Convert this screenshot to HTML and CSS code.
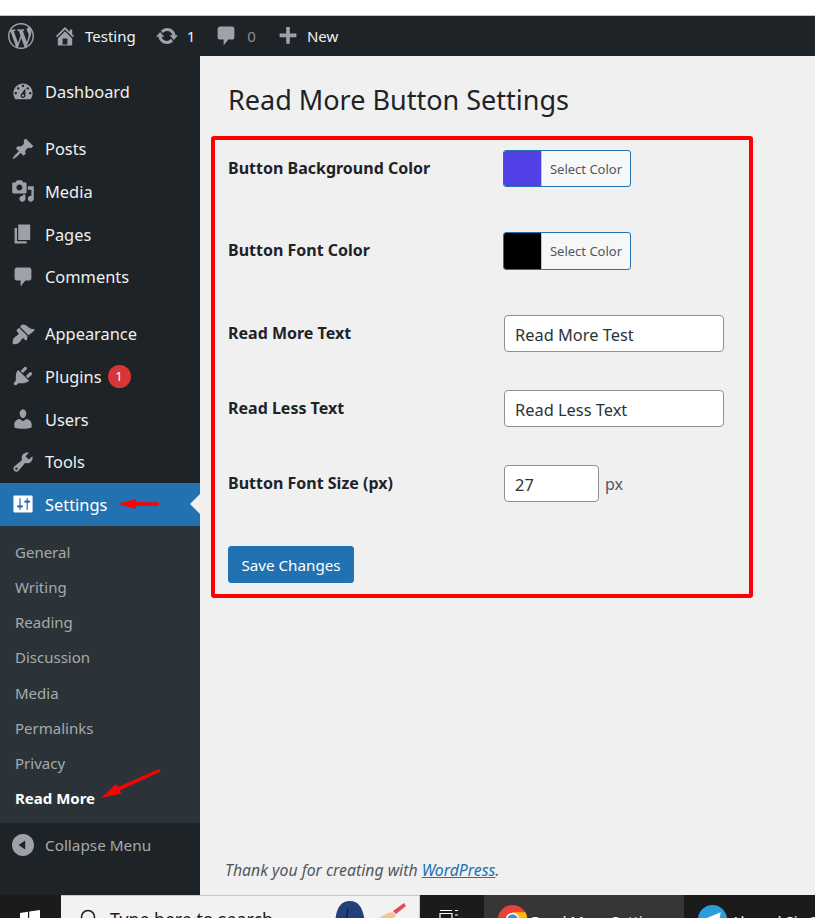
FILE: index.html
```html
<!DOCTYPE html>
<html lang="en">
<head>
<meta charset="utf-8">
<title>Read More Button Settings</title>
<link rel="stylesheet" href="styles.css">
</head>
<body>
<div class="top-strip"></div>
<header class="adminbar">
  <svg class="ab-logo" viewBox="0 0 20 20"><path d="M20 10c0-5.51-4.49-10-10-10C4.48 0 0 4.49 0 10c0 5.52 4.48 10 10 10 5.51 0 10-4.48 10-10zM7.78 15.37L4.37 6.22c.55-.02 1.17-.08 1.17-.08.5-.06.44-1.13-.06-1.11 0 0-1.45.11-2.37.11-.18 0-.37 0-.58-.01C4.12 2.69 6.87 1.11 10 1.11c2.33 0 4.45.87 6.05 2.34-.68-.11-1.65.39-1.65 1.58 0 .74.45 1.36.9 2.1.35.61.55 1.36.55 2.46 0 1.49-1.4 5-1.4 5l-3.03-8.37c.54-.02.82-.17.82-.17.5-.05.44-1.25-.06-1.22 0 0-1.44.12-2.38.12-.87 0-2.33-.12-2.33-.12-.5-.03-.56 1.2-.06 1.22l.92.08 1.26 3.41zM17.41 10c.24-.64.74-1.87.43-4.25.7 1.29 1.05 2.71 1.05 4.25 0 3.29-1.73 6.24-4.4 7.78.97-2.59 1.94-5.2 2.92-7.78zM6.1 18.09C3.12 16.65 1.11 13.53 1.11 10c0-1.3.23-2.48.72-3.59C3.25 10.3 4.67 14.2 6.1 18.09zm4.03-6.63l2.58 6.98c-.86.29-1.76.45-2.71.45-.79 0-1.57-.11-2.29-.33.81-2.38 1.62-4.74 2.42-7.1z"/></svg>
  <svg class="ab-icon ab-home" viewBox="0 0 20 20"><path d="M16 8.5l1.53 1.53-1.06 1.06L10 4.62l-6.47 6.47-1.06-1.06L10 2.5l4 4v-2h2v4zm-6-2.46l6 5.99V18H4v-5.97zM12 17v-5H8v5h4z"/></svg>
  <span class="ab-text ab-site">Testing</span>
  <svg class="ab-icon ab-update" viewBox="0 0 20 20"><path d="M10.2 3.28c3.53 0 6.43 2.61 6.92 6h2.08l-3.5 4-3.5-4h2.32c-.45-1.97-2.21-3.45-4.32-3.45-1.45 0-2.73.71-3.54 1.78L4.95 5.66C6.23 4.2 8.11 3.28 10.2 3.28zm-.4 13.44c-3.52 0-6.43-2.61-6.92-6H.8l3.5-4c1.17 1.33 2.33 2.67 3.5 4H5.48c.45 1.97 2.21 3.45 4.32 3.45 1.45 0 2.73-.71 3.54-1.78l1.71 1.95c-1.28 1.46-3.15 2.38-5.25 2.38z"/></svg>
  <span class="ab-text ab-count">1</span>
  <svg class="ab-icon ab-comment" viewBox="0 0 20 20"><path d="M5 2h10c1.100 0 2 .9 2 2v7c0 1.100-.9 2-2 2h-3l-4 5v-5H5c-1.100 0-2-.9-2-2V4c0-1.100.9-2 2-2z"/></svg>
  <span class="ab-text ab-zero">0</span>
  <svg class="ab-icon ab-plus" viewBox="0 0 20 20"><path d="M17 8v3h-5.5v5.5h-3V11H3V8h5.5V2.500h3V8z"/></svg>
  <span class="ab-text">New</span>
</header>
<div class="workspace">
  <nav class="sidebar">
    <ul class="menu">
      <li class="item"><svg class="mi" viewBox="0 0 20 20"><path d="M3.76 16h12.48c1.1-1.37 1.76-3.11 1.76-5 0-4.42-3.58-8-8-8s-8 3.58-8 8c0 1.89.66 3.63 1.76 5zM10 4c.55 0 1 .45 1 1s-.45 1-1 1-1-.45-1-1 .45-1 1-1zM6 6c.55 0 1 .45 1 1s-.45 1-1 1-1-.45-1-1 .45-1 1-1zm8 0c.55 0 1 .45 1 1s-.45 1-1 1-1-.45-1-1 .45-1 1-1zm-5.37 5.55L12 7v6c0 1.1-.9 2-2 2s-2-.9-2-2c0-.57.24-1.08.63-1.45zM4 10c.55 0 1 .45 1 1s-.45 1-1 1-1-.45-1-1 .45-1 1-1zm12 0c.55 0 1 .45 1 1s-.45 1-1 1-1-.45-1-1 .45-1 1-1zm-5 3c0-.55-.45-1-1-1s-1 .45-1 1 .45 1 1 1 1-.45 1-1z"/></svg>Dashboard</li>
      <li class="item sep"><svg class="mi" viewBox="0 0 20 20"><path d="M10.44 3.02l1.82-1.82 6.36 6.35-1.83 1.82c-1.05-.68-2.48-.57-3.41.36l-.75.75c-.92.93-1.04 2.35-.35 3.41l-1.83 1.82-2.41-2.41-2.8 2.79c-.42.42-3.38 2.71-3.8 2.29s1.86-3.39 2.28-3.81l2.79-2.79L4.1 9.36l1.83-1.82c1.05.69 2.48.57 3.4-.36l.75-.75c.93-.92 1.05-2.35.36-3.41z"/></svg>Posts</li>
      <li class="item"><svg class="mi" viewBox="0 0 20 20"><path d="M13 11V4c0-.55-.45-1-1-1h-1.67L9 1H5L3.67 3H2c-.55 0-1 .45-1 1v7c0 .55.45 1 1 1h10c.55 0 1-.45 1-1zM7 4.5c1.38 0 2.5 1.12 2.5 2.5S8.38 9.5 7 9.5 4.5 8.38 4.5 7 5.62 4.5 7 4.5zM14 6h5v10.5c0 1.38-1.12 2.5-2.5 2.5S14 17.88 14 16.5s1.12-2.5 2.5-2.5c.17 0 .34.02.5.05V9h-3V6zm-4 8.05V13h2v3.5c0 1.38-1.12 2.5-2.5 2.5S7 17.88 7 16.5 8.12 14 9.5 14c.17 0 .34.02.5.05z"/></svg>Media</li>
      <li class="item"><svg class="mi" viewBox="0 0 20 20"><path d="M6 15V2h10v13H6zm-1 1h8v2H3V5h2v11z"/></svg>Pages</li>
      <li class="item"><svg class="mi" viewBox="0 0 20 20"><path d="M5 2h10c1.100 0 2 .9 2 2v7c0 1.100-.9 2-2 2h-3l-4 5v-5H5c-1.100 0-2-.9-2-2V4c0-1.100.9-2 2-2z"/></svg>Comments</li>
      <li class="item sep"><svg class="mi" viewBox="0 0 20 20"><path d="M14.48 11.06L7.41 3.99l1.5-1.5c.5-.56 2.3-.47 3.51.32 1.21.8 1.43 1.28 2.91 2.1 1.18.64 2.45 1.26 4.45.85-.4 1.8-2.6 3.3-3.3 3.9-.7.6-1.4 1.2-2 1.4zm-.71.71L6.7 4.7 4.93 6.47c-.39.39-.39 1.02 0 1.41l1.06 1.06c.39.39.39 1.03 0 1.42-.6.6-1.43 1.11-2.21 1.69-.35.26-.7.53-1.01.84-1.3 1.3-1.6 3.6-1.2 5.4 1.9.4 4 .1 5.3-1.2.31-.31.58-.66.84-1.01.58-.78 1.09-1.61 1.69-2.21.39-.39 1.03-.39 1.42 0l1.06 1.06c.39.39 1.02.39 1.41 0z"/></svg>Appearance</li>
      <li class="item"><svg class="mi" viewBox="0 0 20 20"><path d="M13.11 4.36L9.87 7.6 8 5.73l3.24-3.24c.35-.34 1.05-.2 1.56.32.52.51.66 1.21.31 1.55zm-8 1.77l.91-1.12 9.01 9.01-1.19.84c-.71.71-2.63 1.16-3.82 1.16H6.14L4.9 17.26c-.59.59-1.54.59-2.12 0-.59-.58-.59-1.53 0-2.12l1.24-1.24v-3.88c0-1.13.4-3.19 1.09-3.89zm7.26 3.97l3.24-3.24c.34-.35 1.04-.21 1.55.31.52.51.66 1.21.31 1.55l-3.24 3.25z"/></svg>Plugins<span class="badge">1</span></li>
      <li class="item"><svg class="mi" viewBox="0 0 20 20"><path d="M10 9.25c-2.27 0-2.73-3.44-2.73-3.44C7 4.02 7.82 2 9.97 2c2.16 0 2.98 2.02 2.71 3.81 0 0-.41 3.44-2.68 3.44zm0 2.57L12.72 10c2.39 0 4.52 2.33 4.52 4.53v2.49s-3.65 1.13-7.24 1.13c-3.65 0-7.24-1.13-7.24-1.13v-2.49c0-2.25 1.94-4.48 4.47-4.48z"/></svg>Users</li>
      <li class="item"><svg class="mi" viewBox="0 0 20 20"><path d="M16.68 9.77c-1.34 1.34-3.3 1.67-4.95.99l-5.41 6.52c-.99.99-2.59.99-3.58 0s-.99-2.59 0-3.57l6.52-5.42c-.68-1.65-.35-3.61.99-4.95 1.28-1.28 3.12-1.62 4.72-1.06l-2.89 2.89 2.82 2.82 2.86-2.87c.53 1.58.18 3.39-1.08 4.65zM3.81 16.21c.4.39 1.04.39 1.43 0 .4-.4.4-1.04 0-1.43-.39-.4-1.03-.4-1.43 0-.39.39-.39 1.03 0 1.43z"/></svg>Tools</li>
      <li class="item current"><svg class="mi" viewBox="0 0 20 20"><path d="M18 16V4c0-.55-.45-1-1-1H3c-.55 0-1 .45-1 1v12c0 .55.45 1 1 1h14c.55 0 1-.45 1-1zM8 11h1c.55 0 1 .45 1 1s-.45 1-1 1H8v1.5c0 .28-.22.5-.5.5s-.5-.22-.5-.5V13H6c-.55 0-1-.45-1-1s.45-1 1-1h1V5.5c0-.28.22-.5.5-.5s.5.22.5.5V11zm5-2h-1c-.55 0-1-.45-1-1s.45-1 1-1h1V5.5c0-.28.22-.5.5-.5s.5.22.5.5V7h1c.55 0 1 .45 1 1s-.45 1-1 1h-1v5.5c0 .28-.22.5-.5.5s-.5-.22-.5-.5V9z"/></svg>Settings<span class="notch"></span></li>
    </ul>
    <ul class="submenu">
      <li>General</li>
      <li>Writing</li>
      <li>Reading</li>
      <li>Discussion</li>
      <li>Media</li>
      <li>Permalinks</li>
      <li>Privacy</li>
      <li class="active">Read More</li>
    </ul>
    <div class="collapse"><svg class="mi" viewBox="0 0 20 20"><path d="M10 20c5.52 0 10-4.48 10-10 0-5.52-4.48-10-10-10C4.48 0 0 4.48 0 10c0 5.52 4.48 10 10 10zm2-14v8l-6-4z"/></svg>Collapse Menu</div>
  </nav>
  <main class="content">
    <h1 class="title">Read More Button Settings</h1>
    <form class="panel">
      <div class="row row-color">
        <label class="label">Button Background Color</label>
        <button type="button" class="picker"><span class="swatch swatch-blue"></span><span class="picker-text">Select Color</span></button>
      </div>
      <div class="row row-color">
        <label class="label">Button Font Color</label>
        <button type="button" class="picker picker-tall"><span class="swatch swatch-black"></span><span class="picker-text">Select Color</span></button>
      </div>
      <div class="row row-text">
        <label class="label">Read More Text</label>
        <input class="field" type="text" value="Read More Test">
      </div>
      <div class="row row-text">
        <label class="label">Read Less Text</label>
        <input class="field" type="text" value="Read Less Text">
      </div>
      <div class="row row-size">
        <label class="label">Button Font Size (px)</label>
        <input class="field field-num" type="text" value="27"><span class="unit">px</span>
      </div>
      <button type="button" class="save">Save Changes</button>
    </form>
    <p class="thanks">Thank you for creating with <a href="#">WordPress</a>.</p>
  </main>
</div>
<footer class="taskbar">
  <svg class="win" viewBox="0 0 20 20"><path d="M0 3l8-1.2V9.500H0zM9.200 1.600L20 0v9.500H9.200zM0 10.500h8v7.700L0 17zM9.200 10.500H20V20L9.200 18.400z"/></svg>
  <div class="search">
    <svg class="search-ico" viewBox="0 0 20 20"><circle cx="9" cy="9" r="6.500"/></svg>
    <span class="search-text">Type here to search</span>
    <svg class="helmet" viewBox="0 0 34 26"><path d="M3 26C2 9 7 1 16 1s13 8 14 25z"/><path class="helmet-mark" d="M14 8l-1 9"/></svg>
    <svg class="bat" viewBox="0 0 32 24"><path class="bat-blade" d="M0 18l13-7 5-1 3 3-3 4-8 7H0z"/><path class="bat-grip" d="M18 9l11-8 2 3-10 8z"/></svg>
  </div>
  <svg class="taskview" viewBox="0 0 22 20"><path d="M1 .5h12M1 3.500h12v8H1zM16 .5h3M16 5h3M16 9h3"/></svg>
  <div class="task task-active">
    <svg class="task-ico" viewBox="0 0 28 28"><circle cx="14" cy="14" r="14" fill="#ea4335"/><path d="M14 14L2 21a14 14 0 0 0 12 7z" fill="#34a853"/><path d="M14 7h12.500a14 14 0 0 1-2 16L14 14z" fill="#fbbc05"/><circle cx="14" cy="14" r="6.500" fill="#fff"/><circle cx="14" cy="14" r="5" fill="#4285f4"/></svg>
    <span>Read More Settings</span>
  </div>
  <div class="task">
    <svg class="task-ico" viewBox="0 0 28 28"><circle cx="14" cy="14" r="14" fill="#2a9ddc"/><path d="M5 14l17-7-3 15-5-4-3 3-1-5z" fill="#fff"/></svg>
    <span>Ahmed Sir Class</span>
  </div>
</footer>
<svg class="annotations" viewBox="0 0 815 918">
  <path d="M118 504l18-5-1 3 24 .5v3l-24 .5 1 3z"/>
  <path d="M101 798l15-14 2 3 41-18 1.500 2.500-41 19 2 3z"/>
</svg>
</body>
</html>
```

FILE: styles.css
```css
* { box-sizing: border-box; }
html, body { margin: 0; padding: 0; }
body {
  position: relative;
  height: 918px;
  overflow: hidden;
  display: grid;
  grid-template-rows: 16px 40px 1fr 23px;
  font-family: "Noto Sans", "Open Sans", sans-serif;
  color: #1d2327;
  background: #f0f0f0;
}
ul { list-style: none; margin: 0; padding: 0; }

.top-strip { background: #fff; border-bottom: 1px solid #c3c4c7; }

.adminbar {
  display: flex;
  align-items: center;
  background: #1d2327;
  color: #f0f0f1;
  font-size: 15px;
  padding-left: 8px;
}
.adminbar svg { fill: #9ca2a7; flex: none; }
.ab-logo { width: 26px; height: 26px; margin-right: 19px; }
.ab-icon { width: 24px; height: 24px; }
.ab-site { margin-left: 8px; }
.ab-update { margin-left: 19px; }
.ab-count { margin-left: 8px; }
.ab-comment { margin-left: 19px; }
.ab-zero { margin-left: 9px; color: #8c8f94; }
.ab-plus { margin-left: 20px; margin-right: 7px; }

.workspace { display: grid; grid-template-columns: 200px 1fr; min-height: 0; }

.sidebar { background: #1d2327; color: #f0f0f1; font-size: 16.400px; }
.menu { padding-top: 14px; }
.item {
  position: relative;
  display: flex;
  align-items: center;
  height: 42.750px;
  padding-top: 1px;
}
.sep { margin-top: 14px; }
.mi { width: 24px; height: 24px; margin: 0 10px 0 11px; fill: #9ca2a7; flex: none; }
.current { padding-top: 0; background: #2271b1; color: #fff; }
.current .mi { fill: #fff; }
.notch {
  position: absolute;
  right: 0;
  top: 50%;
  margin-top: -10px;
  border: 10px solid transparent;
  border-left: 0;
  border-right-color: #f0f0f0;
}
.badge {
  display: inline-flex;
  align-items: center;
  justify-content: center;
  width: 23px;
  height: 23px;
  margin-left: 6px;
  border-radius: 50%;
  background: #d63638;
  color: #fff;
  font-size: 13px;
}
.submenu {
  background: #2c3338;
  padding: 9.400px 0 6.600px;
  font-size: 15px;
  color: #a7aaad;
}
.submenu li {
  height: 35.200px;
  line-height: 35.200px;
  padding-left: 15px;
}
.submenu .active { color: #fff; font-weight: 700; }
.collapse {
  display: flex;
  align-items: center;
  height: 44px;
  color: #a7aaad;
  font-size: 15.300px;
}
.collapse .mi { width: 22px; height: 22px; margin: 0 11px 0 12px; }

.content { display: flex; flex-direction: column; padding-left: 11px; min-width: 0; }
.title {
  margin: 24px 0 16px 17px;
  font-size: 27px;
  line-height: 40px;
  font-weight: 400;
}
.panel {
  width: 542px;
  padding: 10px 0 11px 13px;
  border: 4px solid #f00;
  border-radius: 3px;
  display: flex;
  flex-direction: column;
  align-items: flex-start;
}
.row { display: flex; align-items: center; width: 100%; }
.row-color { margin-bottom: 45px; }
.row-text { margin-bottom: 38px; }
.row-size { margin-bottom: 44px; }
.label { width: 276px; padding-bottom: 2px; font-size: 16px; font-weight: 700; flex: none; }
.row-color .label { width: 275px; }

.picker {
  display: flex;
  align-items: stretch;
  width: 128px;
  height: 37px;
  padding: 0;
  background: #f6f7f7;
  border: 1px solid #2271b1;
  border-radius: 3px;
  font: inherit;
  overflow: hidden;
}
.picker-tall { height: 38px; }
.swatch { width: 38px; flex: none; border-right: 1px solid #c3c4c7; }
.swatch-blue { background: #5040e6; }
.swatch-black { background: #000; }
.picker-text { flex: 1; padding-top: 1px; font-size: 13px; line-height: 35px; color: #50575e; text-align: center; }

.field {
  width: 220px;
  height: 37px;
  padding: 1px 10px 0;
  border: 1px solid #8c8f94;
  border-radius: 4px;
  background: #fff;
  color: #2c3338;
  font-family: inherit;
  font-size: 16.400px;
}
.field-num { width: 95px; }
.unit { margin-left: 6px; font-size: 16px; color: #50575e; }

.save {
  width: 126px;
  height: 37px;
  padding: 0;
  background: #2271b1;
  border: 1px solid #2271b1;
  border-radius: 3px;
  color: #fff;
  font-family: inherit;
  font-size: 15.200px;
}

.thanks {
  margin: auto 0 14px 14px;
  font-size: 15.800px;
  font-style: italic;
  color: #50575e;
}
.thanks a { color: #2271b1; }

.taskbar {
  display: flex;
  overflow: hidden;
  background: #1b1b1b;
  color: #f2f2f2;
  font-size: 15px;
}
.taskbar > svg { flex: none; }
.win { width: 20px; height: 20px; margin: 15px 21px 0 20px; fill: #fff; }
.search {
  display: flex;
  width: 359px;
  height: 40px;
  flex: none;
  background: #f2f2f2;
  border-top: 1px solid #c8c8c8;
  border-right: 1px solid #c8c8c8;
  color: #1b1b1b;
  font-size: 17.700px;
}
.search-ico { width: 20px; height: 20px; margin: 12px 0 0 18px; flex: none; fill: none; stroke: #1b1b1b; stroke-width: 1.500; }
.search-text { margin: 12px 0 0 11px; width: 222px; flex: none; line-height: 22px; white-space: nowrap; }
.helmet { width: 38px; height: 29px; margin-top: 4px; fill: #24407a; flex: none; }
.helmet-mark { stroke: #0c1a3a; fill: none; }
.bat { width: 32px; height: 24px; margin: 6px 0 0 5px; flex: none; }
.bat-blade { fill: #f2c48f; }
.bat-grip { fill: #e04b5f; }
.taskview { width: 22px; height: 20px; margin: 15px 23px 0 19px; fill: none; stroke: #fff; stroke-width: 1.200; }
.task { display: flex; width: 200px; flex: none; padding-left: 14px; }
.task span { margin: 16px 0 0 4px; line-height: 20px; white-space: nowrap; }
.task-ico { width: 29px; height: 29px; margin-top: 10px; flex: none; }
.task-active { background: #383634; }

.annotations {
  position: absolute;
  left: 0;
  top: 0;
  width: 815px;
  height: 918px;
  fill: #f00;
  pointer-events: none;
}
```
